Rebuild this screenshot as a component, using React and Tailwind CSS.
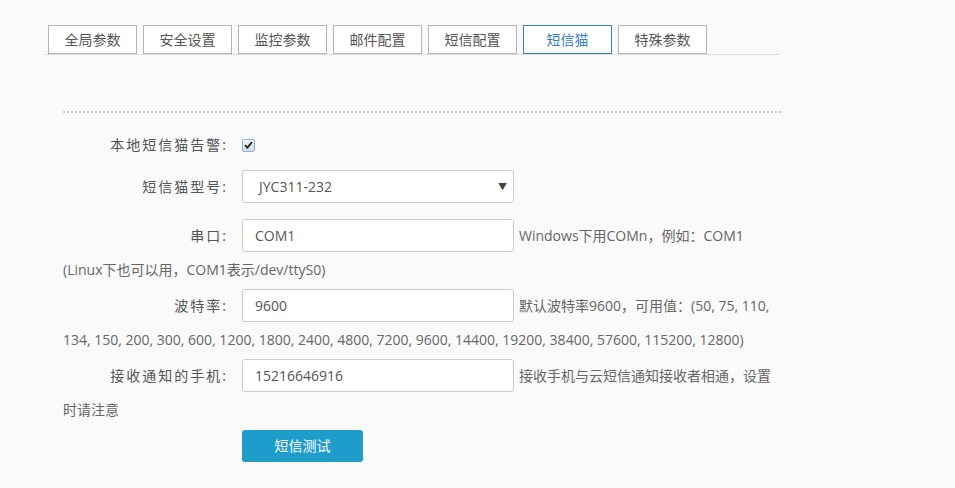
import React from 'react';

const tabs = ['全局参数', '安全设置', '监控参数', '邮件配置', '短信配置', '短信猫', '特殊参数'];

function Label({ children }) {
  return (
    <span className="inline-block w-[179px] pr-[14px] text-right tracking-[2px] text-[#555] align-middle">
      {children}
    </span>
  );
}

function TextInput({ value }) {
  return (
    <input
      readOnly
      value={value}
      className="inline-block w-[272px] h-[33px] my-[6px] align-middle rounded-[3px] border border-[#ccc] bg-white pl-[12px] text-[14px] text-[#555] outline-none"
    />
  );
}

function Help({ children }) {
  return <span className="ml-[5px] text-[#666] align-middle">{children}</span>;
}

export default function App() {
  const active = '短信猫';

  return (
    <div
      className="min-h-screen bg-[#fafafa] text-[14px] leading-[20px] text-[#555]"
      style={{ fontFamily: '"Open Sans", "Noto Sans CJK SC", sans-serif' }}
    >
      {/* tabs */}
      <div className="pt-[25px] pl-[44px]">
        <div className="w-[737px] flex gap-[6px] pl-[4px] border-b border-[#ddd]">
          {tabs.map((t) => (
            <div
              key={t}
              className={
                t === active
                  ? 'w-[89px] h-[29px] flex items-center justify-center bg-white border border-[#3a7fc1] text-[#3a7fc1]'
                  : 'w-[89px] h-[29px] flex items-center justify-center bg-white border border-[#b4b4b4] text-[#555]'
              }
            >
              {t}
            </div>
          ))}
        </div>
      </div>

      <div className="ml-[63px] w-[718px]">
        <div className="mt-[56px] border-t-2 border-dotted border-[#ccc]"></div>

        {/* 本地短信猫告警 */}
        <div className="mt-[21px] mb-[9px]">
          <Label>本地短信猫告警:</Label>
          <span className="inline-flex items-center justify-center w-[13px] h-[13px] align-middle rounded-[2px] border border-[#7eb4ea] bg-gradient-to-b from-[#f4f4f4] to-[#d9d9d9]">
            <svg width="9" height="8" viewBox="0 0 9 8">
              <path d="M1 4.2 L3.4 6.6 L8 1.2" fill="none" stroke="#222" strokeWidth="1.8" />
            </svg>
          </span>
        </div>

        {/* 短信猫型号 */}
        <div className="mb-[4px]">
          <Label>短信猫型号:</Label>
          <div className="inline-flex items-center justify-between w-[272px] h-[33px] my-[6px] align-middle rounded-[3px] border border-[#ccc] bg-white pl-[16px] pr-[6px] text-[#555]">
            <span>JYC311-232</span>
            <span className="text-[9px] text-[#444]">▼</span>
          </div>
        </div>

        {/* 串口 */}
        <div className="mb-[4px] leading-[19px]">
          <Label>串口:</Label>
          <TextInput value="COM1" />
          <Help>Windows下用COMn，例如：COM1 (Linux下也可以用，COM1表示/dev/ttyS0)</Help>
        </div>

        {/* 波特率 */}
        <div className="mb-[4px] leading-[19px]">
          <Label>波特率:</Label>
          <TextInput value="9600" />
          <Help>
            默认波特率9600，可用值：(50, 75, 110, 134, 150, 200, 300, 600, 1200, 1800, 2400, 4800, 7200, 9600, 14400, 19200, 38400, 57600, 115200, 12800)
          </Help>
        </div>

        {/* 接收通知的手机 */}
        <div className="mb-[4px] leading-[19px]">
          <Label>接收通知的手机:</Label>
          <TextInput value="15216646916" />
          <Help>接收手机与云短信通知接收者相通，设置时请注意</Help>
        </div>

        <div className="pl-[179px] pt-[7px]">
          <button className="w-[121px] h-[32px] rounded-[3px] bg-[#1e9dcb] text-white">短信测试</button>
        </div>
      </div>
    </div>
  );
}
